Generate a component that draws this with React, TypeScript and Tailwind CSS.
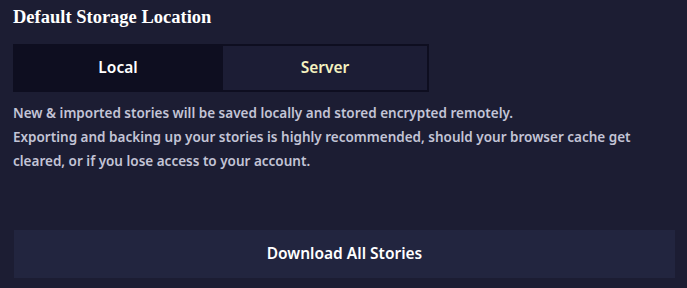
export default function App() {
  return (
    <div className="h-[288px] w-full overflow-hidden bg-[#1c1d33] px-[13px] pt-[5px] font-['Noto_Sans',sans-serif]">
      <h2 className="font-['Liberation_Serif',serif] text-[18.5px] font-bold leading-[24px] text-white">
        Default Storage Location
      </h2>

      <div className="mt-[15px] flex h-[48px] w-[416px] bg-[#0e0e20] p-[2px] pl-0">
        <button
          type="button"
          className="flex w-[210px] items-center justify-center text-[15.5px] font-semibold text-white"
        >
          Local
        </button>
        <button
          type="button"
          className="flex flex-1 items-center justify-center bg-[#1c1d35] text-[15.5px] font-semibold text-[#f5f3c0]"
        >
          Server
        </button>
      </div>

      <p className="mt-[9px] text-[13.5px] font-semibold leading-[24px] text-[#c3c4d6]">
        New &amp; imported stories will be saved locally and stored encrypted remotely.
        <br />
        Exporting and backing up your stories is highly recommended, should your browser cache get
        cleared, or if you lose access to your account.
      </p>

      <button
        type="button"
        className="ml-px mt-[57px] flex h-[48px] w-[661px] items-center justify-center bg-[#22253f] text-[15.5px] font-semibold text-white"
      >
        Download All Stories
      </button>
    </div>
  );
}
